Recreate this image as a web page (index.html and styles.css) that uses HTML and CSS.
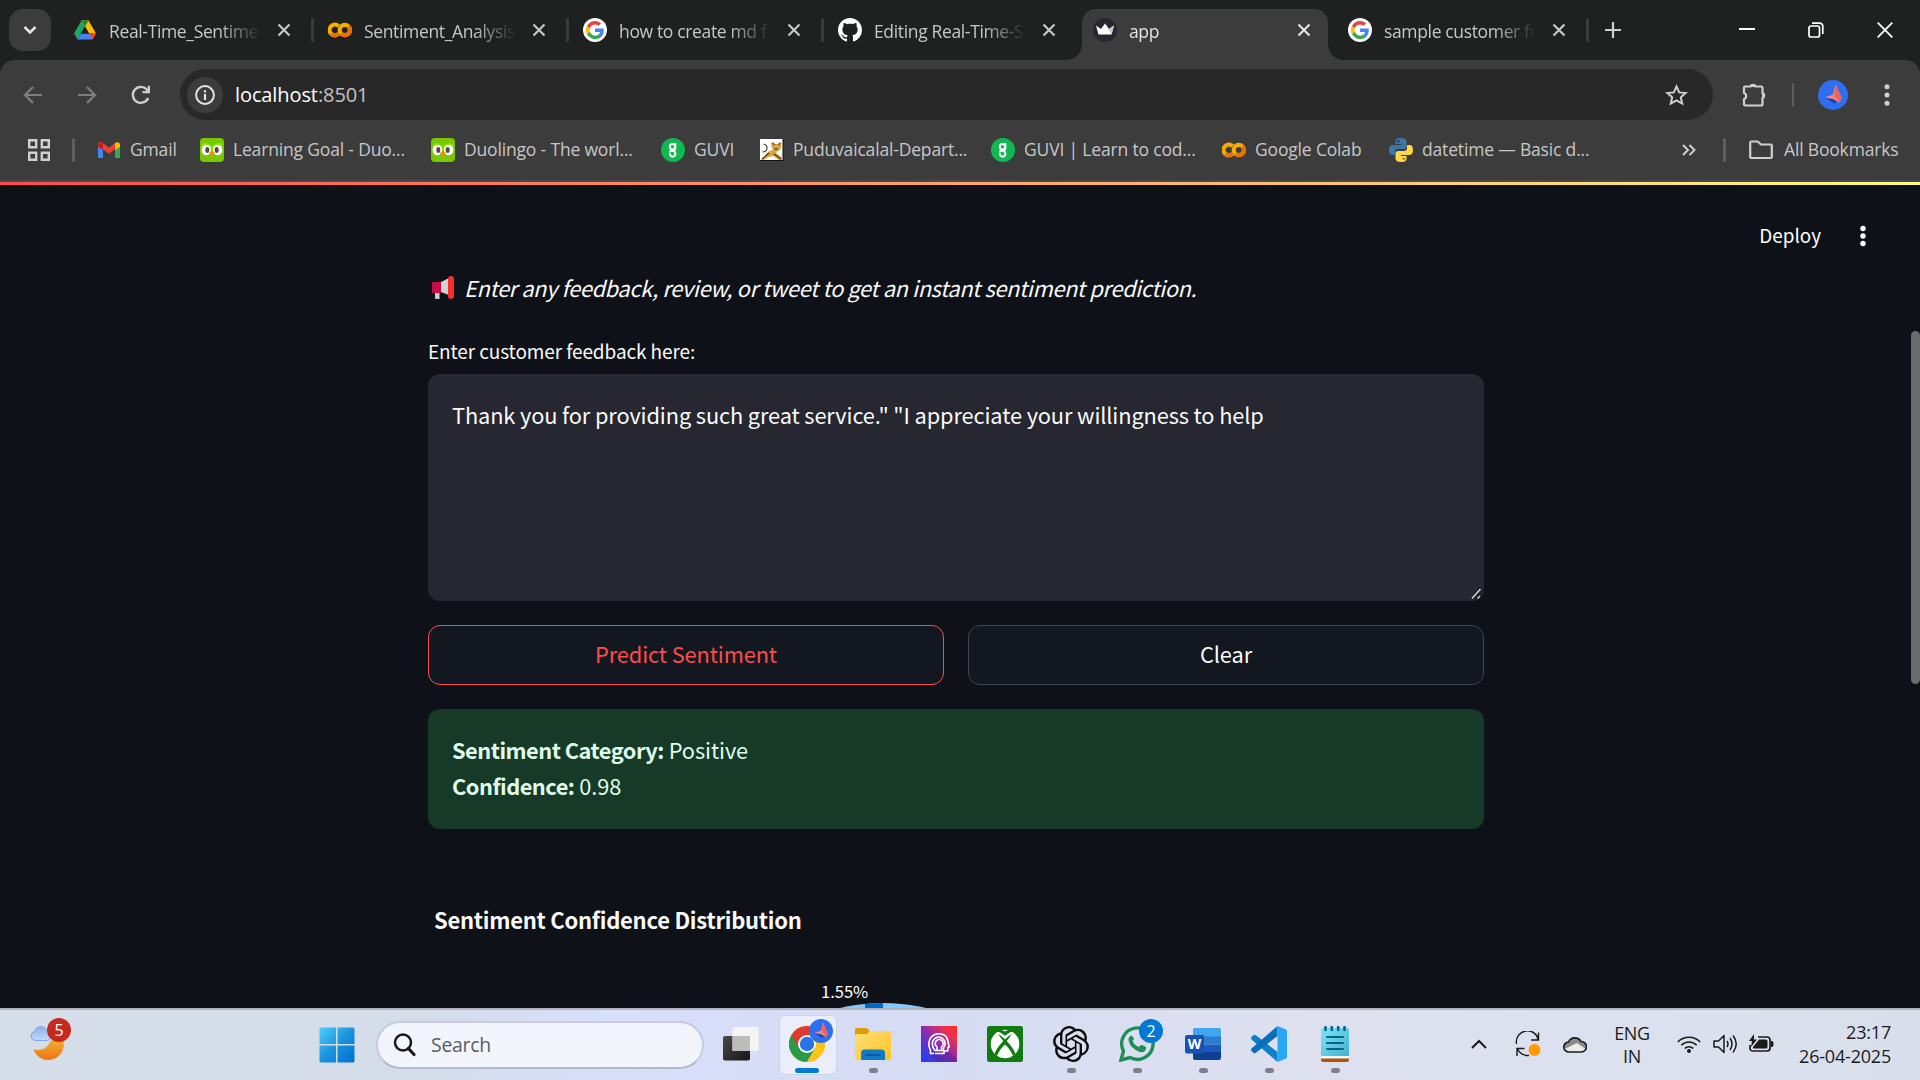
FILE: index.html
```html
<!DOCTYPE html>
<html lang="en">
<head>
<meta charset="utf-8">
<title>app</title>
<link rel="stylesheet" href="styles.css">
</head>
<body>
<svg class="defs" width="0" height="0" aria-hidden="true">
  <defs>
    <linearGradient id="g-start" x1="0" y1="0" x2="1" y2="1"><stop offset="0" stop-color="#4fd0fb"/><stop offset=".5" stop-color="#1a93dd"/><stop offset="1" stop-color="#0070d0"/></linearGradient>
    <linearGradient id="g-moon" x1="0" y1="0" x2="0" y2="1"><stop offset="0" stop-color="#f2b233"/><stop offset="1" stop-color="#ee7416"/></linearGradient>
    <linearGradient id="g-cloud" x1="0" y1="0" x2="0" y2="1"><stop offset="0" stop-color="#8fb0ea"/><stop offset="1" stop-color="#c3d9f8"/></linearGradient>
    <linearGradient id="g-folder" x1="0" y1="0" x2="1" y2="1"><stop offset="0" stop-color="#ffdf75"/><stop offset="1" stop-color="#fdc323"/></linearGradient>
    <linearGradient id="g-head" x1="0" y1="1" x2="1" y2="0"><stop offset="0" stop-color="#1540ff"/><stop offset=".5" stop-color="#8a2db0"/><stop offset=".8" stop-color="#f0304a"/><stop offset="1" stop-color="#ff2a2a"/></linearGradient>
    <linearGradient id="g-note" x1="0" y1="0" x2="1" y2="1"><stop offset="0" stop-color="#7fe4f5"/><stop offset="1" stop-color="#3fb2cf"/></linearGradient>
    <linearGradient id="g-dark" x1="0" y1="0" x2="1" y2="1"><stop offset="0" stop-color="#4a4a4a"/><stop offset="1" stop-color="#161616"/></linearGradient>
  </defs>
  <symbol id="close" viewBox="0 0 14 14"><path d="M1.500 1.500l11 11M12.500 1.500l-11 11" fill="none" stroke="currentColor" stroke-width="2.200"/></symbol>
  <symbol id="google" viewBox="0 0 24 24"><circle cx="12" cy="12" r="12" fill="#fff"/><g transform="translate(2.900 2.900) scale(.76)"><path d="M23.500 12.300c0-.9-.1-1.500-.2-2.200H12v4.500h6.500c-.1 1.100-.8 2.800-2.400 3.900l3.700 2.900c2.300-2.100 3.700-5.200 3.700-9.100z" fill="#4285f4"/><path d="M12 24c3.200 0 6-1.100 7.900-2.900l-3.800-2.900c-1 .7-2.400 1.200-4.100 1.200-3.200 0-5.800-2.100-6.800-5l-3.900 3C3.300 21.300 7.300 24 12 24z" fill="#34a853"/><path d="M5.200 14.400c-.2-.8-.4-1.500-.4-2.400s.1-1.600.4-2.400l-3.900-3C.5 8.200 0 10 0 12s.5 3.800 1.300 5.400z" fill="#fbbc05"/><path d="M12 4.700c2.300 0 3.800 1 4.700 1.800L20.100 3.200C18 1.200 15.200 0 12 0 7.300 0 3.300 2.700 1.300 6.600l3.900 3C6.200 6.700 8.800 4.700 12 4.700z" fill="#ea4335"/></g></symbol>
  <symbol id="colab" viewBox="0 0 24 16"><g fill="none" stroke-width="4.200"><circle cx="16.800" cy="8" r="5.100" stroke="#f9ab00"/><path d="M10.600 4.200A5.300 5.300 0 1 0 10.600 11.800" stroke="#f9ab00"/><path d="M3.400 11.800A5.300 5.300 0 0 0 10.600 11.800M20.500 4.300a5.200 5.200 0 0 1-7.400 7.400" stroke="#e8710a"/></g></symbol>
  <symbol id="duo" viewBox="0 0 24 24"><rect width="24" height="24" rx="4" fill="#78c800"/><path d="M2 6q4-3 10 2 6-5 10-2v7H2z" fill="#8ee000"/><ellipse cx="6.300" cy="12" rx="4.700" ry="5.300" fill="#fff"/><ellipse cx="17.700" cy="12" rx="4.700" ry="5.300" fill="#fff"/><ellipse cx="7.300" cy="12" rx="2" ry="2.900" fill="#4b4b4b"/><ellipse cx="16.700" cy="12" rx="2" ry="2.900" fill="#4b4b4b"/><path d="M9 14.800q3-2 6 0L12 19z" fill="#f49000"/></symbol>
  <symbol id="guvi" viewBox="0 0 24 24"><circle cx="12" cy="12" r="12" fill="#0fb950"/><g fill="none" stroke="#fff" stroke-width="2"><circle cx="11.500" cy="8.700" r="2.700"/><path d="M14.300 5v5.500q0 2-3 2.200-2.500.3-2.500 1.700"/><path d="M9 15.500a2.700 2.700 0 1 0 5.300 0q0-2-2.500-2.600"/></g></symbol>
  <symbol id="avatar" viewBox="0 0 30 30"><circle cx="15" cy="15" r="15" fill="#2d6ff0"/><path d="M6 17l11 7 2-6z" fill="#1647a8"/><path d="M17.500 4L15 14.500 6.500 17.500l8.500 1.500 6.500 3.500 2-4.500z" fill="#f88478"/><path d="M17.500 4l-1 11.500 5 7 2-4.500z" fill="#ef6259"/></symbol>
</svg>

<header class="browser">
  <div class="tabstrip">
    <div class="tab-search"><svg width="14" height="10" viewBox="0 0 14 10"><path d="M1.500 2L7 7.500 12.500 2" fill="none" stroke="#e3e3e3" stroke-width="2.600"/></svg></div>
    <div class="tabs">
      <div class="tab"><svg class="fav" viewBox="0 0 24 24"><path d="M8.500 2.500h7L8 15.500 4.500 21.500 1 15.500z" fill="#1fa463"/><path d="M15.500 2.500L23 15.500h-7L8.500 2.500z" fill="#fbbc04"/><path d="M8.500 2.500h7L12 8.500z" fill="#188038"/><path d="M8 15.500h15l-3.500 6h-15z" fill="#4285f4"/><path d="M16 15.500h7l-3.500 6z" fill="#ea4335"/><path d="M12 8.500l4 7H8z" fill="#1f2020"/></svg><span class="tab-title">Real-Time_Sentime</span><svg class="x"><use href="#close"/></svg></div>
      <div class="tab"><svg class="fav" viewBox="0 -4 24 24"><use href="#colab" width="24" height="16"/></svg><span class="tab-title">Sentiment_Analysis</span><svg class="x"><use href="#close"/></svg></div>
      <div class="tab"><svg class="fav"><use href="#google"/></svg><span class="tab-title">how to create md f</span><svg class="x"><use href="#close"/></svg></div>
      <div class="tab before-active"><svg class="fav" viewBox="0 0 16 16"><path fill="#fff" d="M8 0C3.580 0 0 3.580 0 8c0 3.540 2.290 6.530 5.470 7.590.4.070.55-.17.55-.38 0-.19-.01-.82-.01-1.490-2.010.37-2.530-.49-2.690-.94-.09-.23-.48-.94-.82-1.130-.28-.15-.68-.52-.01-.53.63-.01 1.080.58 1.230.82.72 1.210 1.870.87 2.330.66.070-.52.280-.87.510-1.070-1.780-.2-3.640-.89-3.640-3.950 0-.87.310-1.590.82-2.150-.08-.2-.36-1.020.08-2.120 0 0 .67-.21 2.200.82.64-.18 1.320-.27 2-.27s1.360.09 2 .27c1.530-1.040 2.200-.82 2.200-.82.44 1.100.16 1.920.08 2.120.51.56.82 1.270.82 2.150 0 3.070-1.870 3.750-3.650 3.950.29.25.54.73.54 1.480 0 1.070-.01 1.930-.01 2.200 0 .21.15.46.55.38A8.010 8.010 0 0 0 16 8c0-4.420-3.580-8-8-8z"/></svg><span class="tab-title">Editing Real-Time-S</span><svg class="x"><use href="#close"/></svg></div>
      <div class="tab active"><svg class="fav" viewBox="0 0 24 24"><circle cx="12" cy="12" r="12" fill="#262730"/><path d="M3 7.500l5 3.500L12 5.500l4 5.500 5-3.500-2.500 9h-13z" fill="#fff"/><path d="M12 5.500l4 5.500 5-3.500-2.500 9z" fill="#c9c9cd"/></svg><span class="tab-title">app</span><svg class="x"><use href="#close"/></svg></div>
      <div class="tab"><svg class="fav"><use href="#google"/></svg><span class="tab-title">sample customer fe</span><svg class="x"><use href="#close"/></svg></div>
    </div>
    <svg class="new-tab" width="18" height="18" viewBox="0 0 18 18"><path d="M9 1v16M1 9h16" stroke="#d0d0d0" stroke-width="2.200"/></svg>
    <div class="window-buttons">
      <svg width="16" height="16" viewBox="0 0 16 16"><path d="M0 7h16" stroke="#fff" stroke-width="2"/></svg>
      <svg width="16" height="16" viewBox="0 0 16 16"><rect x="1" y="4" width="10.500" height="11" rx="2" fill="none" stroke="#fff" stroke-width="1.700"/><path d="M4 1.200h7.500q3.300 0 3.300 3.300V12" fill="none" stroke="#fff" stroke-width="1.700"/></svg>
      <svg width="16" height="16" viewBox="0 0 16 16"><path d="M.7.7l14.600 14.600M15.300.7L.7 15.300" stroke="#fff" stroke-width="1.800"/></svg>
    </div>
  </div>

  <div class="toolbar">
    <div class="nav">
      <svg width="20" height="20" viewBox="0 0 20 20"><path d="M19 10H3M10 2l-8 8 8 8" fill="none" stroke="#7f7f7f" stroke-width="2.200"/></svg>
      <svg width="20" height="20" viewBox="0 0 20 20"><path d="M1 10h16M10 2l8 8-8 8" fill="none" stroke="#7f7f7f" stroke-width="2.200"/></svg>
      <svg width="20" height="20" viewBox="0 0 20 20"><path d="M17.200 13A8 8 0 1 1 15.800 4.500L18 7" fill="none" stroke="#cfcfcf" stroke-width="2.400"/><path d="M19 .8v7.500h-7.500V6h5.200V.8z" fill="#cfcfcf"/></svg>
    </div>
    <div class="omnibox">
      <div class="site-info"><svg width="20" height="20" viewBox="0 0 20 20"><circle cx="10" cy="10" r="8.900" fill="none" stroke="#e3e3e3" stroke-width="2"/><path d="M10 9v6M10 5.200v2.300" stroke="#e3e3e3" stroke-width="2.200"/></svg></div>
      <span class="url">localhost<span class="port">:8501</span></span>
      <svg class="star" width="23" height="22" viewBox="0 0 23 22"><path d="M11.500 2.500l2.700 5.900 6.400.6-4.800 4.300 1.400 6.300-5.700-3.300-5.700 3.300 1.400-6.300L2.400 9l6.400-.6z" fill="none" stroke="#cfcfcf" stroke-width="2"/></svg>
    </div>
    <svg class="ext" width="26" height="26" viewBox="0 0 26 26"><path d="M3 5.500q0-1 1-1h5.500a2.700 2.700 0 0 1 5 0H20q1.500 0 1.500 1.500v5a2.700 2.700 0 0 1 0 5v6q0 1.500-1.500 1.500H4q-1 0-1-1v-5.300a3.300 3.300 0 0 0 0-6.200z" fill="none" stroke="#cfcfcf" stroke-width="2.200"/><path d="M9 5a3 3 0 0 1 6 0zM21 10.500a3 3 0 0 1 0 6z" fill="#cfcfcf"/></svg>
    <i class="divider"></i>
    <svg class="profile" width="30" height="30"><use href="#avatar"/></svg>
    <svg class="menu" width="6" height="26" viewBox="0 0 6 26"><g fill="#cfcfcf"><circle cx="3" cy="4.800" r="2.500"/><circle cx="3" cy="13" r="2.500"/><circle cx="3" cy="21.200" r="2.500"/></g></svg>
  </div>

  <nav class="bookmarks">
    <svg class="apps" width="22" height="22" viewBox="0 0 22 22"><path d="M1.200 1.200h7v7h-7zM13.800 1.200h7v7h-7zM1.200 13.800h7v7h-7zM13.800 13.800h7v7h-7z" fill="none" stroke="#cfcfcf" stroke-width="2.400"/></svg>
    <i class="divider"></i>
    <a class="bm"><svg viewBox="0 0 24 24"><path d="M1 6v14h5V10z" fill="#4285f4"/><path d="M23 6v14h-5V10z" fill="#34a853"/><path d="M1 5.500Q2 3 5 4.300l7 5.500 7-5.500v6L12 15.800 1 8z" fill="#ea4335"/><path d="M1 9V6.500Q2 3 6 5v7z" fill="#c5221f"/><path d="M23 9V6.500Q22 3 18 5.200V12z" fill="#fbbc04"/></svg><span>Gmail</span></a>
    <a class="bm"><svg><use href="#duo"/></svg><span>Learning Goal - Duo...</span></a>
    <a class="bm"><svg><use href="#duo"/></svg><span>Duolingo - The worl...</span></a>
    <a class="bm"><svg><use href="#guvi"/></svg><span>GUVI</span></a>
    <a class="bm"><svg viewBox="0 0 24 24"><path d="M0 1h23.500v22H0z" fill="#111"/><path d="M0 1h22.500v21H0z" fill="#fff"/><path d="M11 5l2-1 2 2h3l2-2 1.500 1-.5 5q-1 3-4 3.500l-1 1.500 6.500 5v2h-4l-5-4-5 1-5 3H1l4-4q2-5 8-6-2-3-2-7z" fill="#d9a441"/><path d="M3.500 6q4 1 3.500 4.500T2.500 14M9 15l-7 6M13 5l1.500 2M20 5l-1.500 2M14 11h4M14 16l7 5" fill="none" stroke="#4a3515" stroke-width="1.100"/></svg><span>Puduvaicalal-Depart...</span></a>
    <a class="bm"><svg><use href="#guvi"/></svg><span>GUVI | Learn to cod...</span></a>
    <a class="bm"><svg viewBox="0 -4 24 24"><use href="#colab" width="24" height="16"/></svg><span>Google Colab</span></a>
    <a class="bm"><svg viewBox="0 0 24 24"><path d="M11.800 0C7.500 0 6.500 1.500 6.500 3.500V6H12v1H4Q0 7 0 12t3.500 5H6v-3q0-3 3-3h6q2.500 0 2.500-2.500v-5Q17.500 0 11.800 0z" fill="#3b78aa"/><path d="M12.200 24c4.300 0 5.300-1.500 5.300-3.500V18H12v-1h8q4 0 4-5t-3.500-5H18v3q0 3-3 3H9q-2.500 0-2.500 2.500v5Q6.500 24 12.200 24z" fill="#ffd845"/><circle cx="9.300" cy="3.200" r="1.200" fill="#243b50"/><circle cx="14.700" cy="20.800" r="1.200" fill="#a08020"/></svg><span>datetime — Basic d...</span></a>
    <svg class="more" width="14" height="12" viewBox="0 0 14 12"><path d="M1 1l5 5-5 5M7.500 1l5 5-5 5" fill="none" stroke="#cfcfcf" stroke-width="2"/></svg>
    <i class="divider"></i>
    <a class="bm all"><svg viewBox="0 0 24 24"><path d="M1.200 19V4.500q0-1 1-1h6.500L12 6.500h9.800q1 0 1 1V19q0 1-1 1H2.200q-1 0-1-1z" fill="none" stroke="#cfcfcf" stroke-width="2.200"/></svg><span>All Bookmarks</span></a>
  </nav>
</header>

<main class="page">
  <div class="rainbow"></div>
  <div class="app-header">
    <span class="deploy">Deploy</span>
    <svg width="6" height="22" viewBox="0 0 6 22"><g fill="#fff"><circle cx="3" cy="3.500" r="2.700"/><circle cx="3" cy="11" r="2.700"/><circle cx="3" cy="18.500" r="2.700"/></g></svg>
  </div>
  <section class="content">
    <p class="intro"><svg width="23" height="23" viewBox="0 0 23 23"><path d="M3 16h4.500v7H4q-1 0-1-1z" fill="#cfcfcf"/><path d="M9 6l9-4.500v18L9 16z" fill="#d3d3d3"/><path d="M1.500 6H9v11H1.500Q0 17 0 15.500v-8Q0 6 1.500 6z" fill="#ca0b4a"/><rect x="16" y="0" width="6" height="23" rx="3" fill="#f92f2f"/></svg><em>Enter any feedback, review, or tweet to get an instant sentiment prediction.</em></p>
    <label class="label">Enter customer feedback here:</label>
    <div class="textarea"><span>Thank you for providing such great service." "I appreciate your willingness to help</span>
      <svg class="grip" width="12" height="12" viewBox="0 0 12 12"><path d="M1 11.500L10.500 1M6 11.500L11 6.500" stroke="#111" stroke-width="1.500"/><path d="M1.800 11.500L10.500 2M7.500 11.500l2.500-2.500" stroke="#d8d8d8" stroke-width="1.500"/></svg></div>
    <div class="buttons">
      <button class="btn primary"><span>Predict Sentiment</span></button>
      <button class="btn"><span>Clear</span></button>
    </div>
    <div class="result">
      <div><b>Sentiment Category:</b> Positive</div>
      <div><b>Confidence:</b> 0.98</div>
    </div>
    <div class="chart">
      <h2>Sentiment Confidence Distribution</h2>
      <div class="slice-label">1.55%</div>
      <svg class="pie" width="374" height="374" viewBox="-187 -187 374 374"><circle r="187" fill="#83c9ff"/><path d="M0 0V-187A187 187 0 0 0 -18.200 -186.100z" fill="#0068c9"/></svg>
    </div>
  </section>
  <div class="scroll-thumb"></div>
</main>

<footer class="taskbar">
  <div class="weather"><svg width="40" height="40" viewBox="0 0 40 40"><path d="M5 15.500a4.600 4.600 0 0 1-.5-9A6.500 6.500 0 0 1 16.500 5q4 1 4 5.500t-3 5z" fill="url(#g-cloud)" stroke="#86a6e8"/><path d="M33 14a15.300 15.300 0 0 1-29.500 10.500Q16 27 21 15.500z" fill="url(#g-moon)"/></svg><span class="badge red">5</span></div>
  <div class="start"><svg width="36" height="36" viewBox="0 0 36 36"><path d="M2 .5h15v16.600H.5V2Q.5.500 2 .5zM18.500.5H34Q35.500.500 35.500 2v15.100h-17zM.5 18.500H17v17H2Q.500 35.500.500 34zM18.500 18.500h17V34q0 1.500-1.500 1.500H18.500z" fill="url(#g-start)"/></svg></div>
  <div class="search"><svg width="23" height="24" viewBox="0 0 23 24"><circle cx="10" cy="9.500" r="8" fill="none" stroke="#1b1b1b" stroke-width="2.500"/><path d="M15.500 15.500l5.500 6" stroke="#1b1b1b" stroke-width="3.200" stroke-linecap="round"/></svg><span>Search</span></div>
  <div class="pinned">
    <div class="slot"><svg viewBox="0 0 36 36"><rect x="0" y="10" width="27" height="24.500" rx="2" fill="url(#g-dark)"/><rect x="9.500" y="1" width="26" height="24" rx="1.500" fill="#f4f4f4"/><rect x="9.500" y="10" width="17.500" height="15" fill="#bcbcbc"/></svg></div>
    <div class="slot current"><svg viewBox="0 0 36 36"><circle cx="18" cy="18" r="18" fill="#fbc116"/><path d="M18 18L2.400 9A18 18 0 0 0 18 36l8-13z" fill="#2a9a48"/><path d="M18 18L10.200 22.500 2.400 9A18 18 0 0 1 33.600 9H18z" fill="#df3a2f"/><path d="M25.800 22.500L18 36A18 18 0 0 0 33.600 9H18z" fill="#fcc31b"/><circle cx="18" cy="18" r="9" fill="#fff"/><circle cx="18" cy="18" r="7.200" fill="#2a72e8"/></svg><svg class="mini"><use href="#avatar"/></svg></div>
    <div class="slot open"><svg viewBox="0 0 36 36"><path d="M0 4q0-2 2-2h9q1.500 0 2.500 1.500L15 6v5H0z" fill="#dd9d08"/><path d="M0 10q0-2 2-2h10l3-3h19q2 0 2 2v25q0 2-2 2H2q-2 0-2-2z" fill="url(#g-folder)"/><path d="M6 34v-7q0-3.500 3.500-3.500h17q3.500 0 3.500 3.500v7z" fill="#1279c8"/><path d="M11.500 29h13" stroke="#0b5a9c" stroke-width="2" stroke-linecap="round"/></svg></div>
    <div class="slot"><svg viewBox="0 0 36 36"><path d="M0 0h36v36H0z" fill="url(#g-head)"/><path d="M9 28h11l8-3 8 8v3H16z" fill="#1b0a60" opacity=".18"/><g fill="none" stroke="#fff" stroke-width="1.600" stroke-linejoin="round"><path d="M13 27.500H9.500V24.500Q7.800 21 7.800 17.500A9.800 9.800 0 0 1 17.500 7.700Q26 7.700 27 15.500l1.200 5.500-1.400.6V25H23v2.500h-9"/><path d="M14 24.500q-2.700-3-2.700-7a6.400 6.400 0 0 1 12.800 0q0 2.500-1.600 4.200v2.800h-8.500z"/><path d="M16 24v-3.200a4 4 0 1 1 4.500 0V24"/></g></svg></div>
    <div class="slot"><svg viewBox="0 0 36 36"><rect width="36" height="36" rx="2.500" fill="#107c10"/><circle cx="18" cy="18" r="14.300" fill="#fff"/><path d="M18 9.800C14 6.500 10.500 5 8.300 5.600 11 3 14.500 3.500 18 5.500c3.500-2 7-2.500 9.700.1C25.500 5 22 6.500 18 9.800zM11 8Q15 10 18 13.300 21 10 25 8q-2.500 3.500-5.300 7Q26 21.500 28.500 27.500L26 30Q23.500 23.500 18 18.500 12.500 23.500 10 30L7.500 27.500Q10 21.500 16.300 15 13.500 11.500 11 8z" fill="#107c10"/></svg></div>
    <div class="slot open"><svg viewBox="0 0 24 24"><path fill="#0b0b0b" d="M22.282 9.821a5.985 5.985 0 0 0-.516-4.910 6.046 6.046 0 0 0-6.510-2.900A6.065 6.065 0 0 0 4.981 4.182a5.985 5.985 0 0 0-3.998 2.900 6.046 6.046 0 0 0 .743 7.097 5.980 5.980 0 0 0 .510 4.911 6.051 6.051 0 0 0 6.515 2.900A5.985 5.985 0 0 0 13.260 24a6.056 6.056 0 0 0 5.772-4.206 5.990 5.990 0 0 0 3.998-2.900 6.056 6.056 0 0 0-.748-7.073zM13.260 22.430a4.476 4.476 0 0 1-2.876-1.040l.141-.081 4.779-2.758a.795.795 0 0 0 .392-.681v-6.737l2.020 1.168a.071.071 0 0 1 .038.052v5.583a4.504 4.504 0 0 1-4.494 4.494zM3.600 18.304a4.470 4.470 0 0 1-.535-3.014l.142.085 4.783 2.759a.771.771 0 0 0 .780 0l5.843-3.369v2.332a.080.080 0 0 1-.033.062L9.740 19.950a4.500 4.500 0 0 1-6.140-1.646zM2.340 7.896a4.485 4.485 0 0 1 2.366-1.973V11.600a.766.766 0 0 0 .388.676l5.815 3.355-2.020 1.168a.076.076 0 0 1-.071 0l-4.830-2.786A4.504 4.504 0 0 1 2.340 7.872zm16.597 3.855l-5.833-3.387L15.119 7.200a.076.076 0 0 1 .071 0l4.830 2.791a4.494 4.494 0 0 1-.676 8.105v-5.678a.790.790 0 0 0-.407-.667zm2.010-3.023l-.141-.085-4.774-2.782a.776.776 0 0 0-.785 0L9.409 9.230V6.897a.066.066 0 0 1 .028-.061l4.830-2.787a4.500 4.500 0 0 1 6.680 4.660zm-12.640 4.135l-2.020-1.164a.080.080 0 0 1-.038-.057V6.075a4.500 4.500 0 0 1 7.375-3.453l-.142.080L8.704 5.460a.795.795 0 0 0-.393.681zm1.097-2.365l2.602-1.500 2.607 1.500v2.999l-2.597 1.500-2.607-1.500z"/></svg></div>
    <div class="slot open"><svg viewBox="0 0 36 36"><path d="M2 34l2.500-9A15.700 15.700 0 1 1 11 31.500z" fill="none" stroke="#1d8f55" stroke-width="3.400"/><path d="M12.500 9.500q-3 1-3 4.500 1 8 11.500 12 4.500 1 6-3v-2l-4.500-2.300q-1 .2-2.500 2.300-4.500-1.500-6.500-6 1.700-1.500 1.500-2.500z" fill="#1d8f55"/></svg><span class="badge blue">2</span></div>
    <div class="slot open"><svg viewBox="0 0 36 36"><path d="M10 2h24q2 0 2 2v7H8V4q0-2 2-2z" fill="#41a5ee"/><path d="M8 10.500h28v8H8z" fill="#2b7cd3"/><path d="M8 18.500h28v8H8z" fill="#185abd"/><path d="M8 26h28v6q0 2-2 2H10q-2 0-2-2z" fill="#103f91"/><rect x="0" y="9" width="19" height="18.500" rx="2" fill="#1652b0"/><text x="9.500" y="23" class="word-w">W</text></svg></div>
    <div class="slot open"><svg viewBox="0 0 36 36"><path d="M0 11.500l2.500-2.500q1-.5 2 0L26.500 26v10L.5 13.500z" fill="#0d80cc"/><path d="M0 24.500l2.500 2.500q1 .5 2 0L26.500 10V0L.5 22.500z" fill="#0a6fb8"/><path d="M26.500 0L35 3.500q1 .5 1 1.500v26q0 1-1 1.500L26.500 36z" fill="#2aa7f2"/></svg></div>
    <div class="slot open"><svg viewBox="0 0 36 36"><path d="M4 32h28v2q0 2-2 2H6q-2 0-2-2z" fill="#b4530c"/><rect x="4" y="2" width="28" height="29.500" rx="2" fill="url(#g-note)"/><path d="M4 30h28v2.500H4z" fill="#f2f7fa"/><g stroke="#0a6384" stroke-linecap="round"><path d="M8.500 1v3M14.800 1v3M21.200 1v3M27.500 1v3" stroke-width="2.600"/><path d="M10 11h16M10 17h16M10 23h16" stroke-width="2"/></g></svg></div>
  </div>
  <div class="tray">
    <svg class="chev" width="16" height="10" viewBox="0 0 16 10"><path d="M1 9l7-7 7 7" fill="none" stroke="#1b1b1b" stroke-width="2"/></svg>
    <svg class="sync" width="26" height="26" viewBox="0 0 26 26"><path d="M1.500 13A11 11 0 0 1 23.500 9M23.500 1.500V9H16M14 24.500Q6 25 2.500 18M2 25v-7.500h7.500" fill="none" stroke="#1b1b1b" stroke-width="1.400"/><circle cx="19.500" cy="19" r="6" fill="#ff9a00"/></svg>
    <svg class="cloud" width="24" height="18" viewBox="0 0 24 18"><path d="M6 17a5 5 0 0 1-.5-10A7 7 0 0 1 18 6.500 5.200 5.200 0 0 1 18.500 17z" fill="#8b8b8b"/><path d="M1.500 14L14 8l8.500 6-2.500 3H5z" fill="#ececec"/><path d="M6 17a5 5 0 0 1-.5-10A7 7 0 0 1 18 6.500 5.200 5.200 0 0 1 18.500 17z" fill="none" stroke="#1b1b1b" stroke-width="1.600"/></svg>
    <div class="lang">ENG<br>IN</div>
    <svg class="wifi" width="24" height="18" viewBox="0 0 24 18"><path d="M.8 7a15.500 15.500 0 0 1 22.400 0M4.300 10.300a10.700 10.700 0 0 1 15.400 0M7.700 13.500a6 6 0 0 1 8.600 0" fill="none" stroke="#1b1b1b" stroke-width="1.600"/><circle cx="12" cy="16" r="2" fill="#1b1b1b"/></svg>
    <svg class="vol" width="26" height="20" viewBox="0 0 26 20"><path d="M1 7h4.500L11 1.500v17L5.500 13H1z" fill="none" stroke="#1b1b1b" stroke-width="1.500" stroke-linejoin="round"/><path d="M14 7q2 3 0 6M17 4q4 6 0 12M20 1.500q6.500 8.500 0 17" fill="none" stroke="#1b1b1b" stroke-width="1.500"/></svg>
    <svg class="batt" width="25" height="20" viewBox="0 0 25 20"><path d="M9 3h9q3 0 3 3v8q0 3-3 3H4q-3 0-3-3v-3" fill="none" stroke="#1b1b1b" stroke-width="1.700"/><path d="M10 5.500h7q1.500 0 1.500 1.500v6q0 1.500-1.500 1.500H5Q3.500 14.500 4 13zM22 7h1q1.500 0 1.500 3T23 13h-1zM5 0L0 7h3l-1 6 6-7.500H5z" fill="#1b1b1b"/></svg>
    <div class="clock">23:17<br>26-04-2025</div>
  </div>
</footer>
</body>
</html>
```
FILE: styles.css
```css
* { box-sizing: border-box; }
body {
  margin: 0;
  width: 1920px;
  height: 1080px;
  overflow: hidden;
  display: flex;
  flex-direction: column;
  background: #0e1117;
  font-family: "Open Sans", "Noto Sans", sans-serif;
  font-size: 17.500px;
  white-space: nowrap;
}
svg { display: block; flex: none; }
.defs { position: absolute; }

/* Browser window */
.browser { flex: none; height: 182px; background: #1f2020; }
.tabstrip { height: 60px; display: flex; align-items: center; }
.tab-search {
  width: 42px; height: 42px; margin: 0 6px 0 9px;
  border-radius: 14px; background: #3c3c3c;
  display: flex; align-items: center; justify-content: center;
}
.tabs { display: flex; height: 60px; flex: none; }
.tab {
  position: relative;
  width: 255px; height: 60px; padding-left: 16px;
  display: flex; align-items: center;
  color: #c7c7c7;
}
.tab::after {
  content: ""; position: absolute; right: -2px; top: 18px;
  width: 3px; height: 24px; border-radius: 2px; background: #3c3c3c;
}
.tab .fav { width: 24px; height: 24px; z-index: 1; }
.tab-title {
  z-index: 1;
  width: 156px; height: 26px; margin: 2px 12px 0 12px;
  line-height: 26px; overflow: hidden; letter-spacing: -.35px;
  -webkit-mask-image: linear-gradient(90deg, #000 110px, transparent 152px);
  mask-image: linear-gradient(90deg, #000 110px, transparent 152px);
}
.tab .x { width: 14px; height: 14px; z-index: 1; }
.tab.before-active::after { display: none; }
.tab.active { color: #e3e3e3; }
.tab.active::before {
  content: ""; position: absolute; left: 5px; right: 4px; top: 9px; bottom: 0;
  background: #3c3c3c; border-radius: 14px 14px 0 0;
}
.tab.active::after {
  left: -10px; right: -11px; top: auto; bottom: 0; width: auto; height: 15px; border-radius: 0;
  background:
    radial-gradient(circle at 0 0, transparent 14.500px, #3c3c3c 15px) left / 15px 15px no-repeat,
    radial-gradient(circle at 100% 0, transparent 14.500px, #3c3c3c 15px) right / 15px 15px no-repeat;
}
.new-tab { margin-left: 17px; }
.window-buttons { margin-left: auto; margin-right: 27px; display: flex; gap: 53px; }

.toolbar {
  height: 69px;
  background: #3c3c3c; border-radius: 15px 15px 0 0;
  display: flex; align-items: center;
}
.nav { width: 180px; padding-left: 23px; display: flex; gap: 34px; }
.omnibox {
  width: 1533px; height: 51px; border-radius: 26px; background: #282828;
  padding: 0 25px 0 7px; display: flex; align-items: center;
}
.site-info {
  width: 36px; height: 36px; border-radius: 50%; background: #3c3c3c; margin-right: 12px;
  display: flex; align-items: center; justify-content: center;
}
.url { flex: 1; font-size: 20px; letter-spacing: -.1px; color: #fff; }
.port { color: #c3c3c3; }
.ext { margin-left: 28px; }
.divider { width: 3px; height: 24px; border-radius: 2px; background: #5e5e5e; flex: none; }
.toolbar .divider { margin-left: 25px; width: 2px; }
.profile { margin-left: 24px; }
.menu { margin-left: 36px; }

.bookmarks {
  height: 53px; padding-bottom: 10px;
  background: #3c3c3c; border-bottom: 2px solid #484848;
  color: #c7c7c7;
  display: grid; align-items: center; justify-content: start;
  grid-template-columns: 44px 25px 103px 231px 230px 99px 231px 231px 167px 293px 41px 26px 170px;
  padding-left: 28px;
}
.bm { display: flex; align-items: center; gap: 9px; letter-spacing: -.17px; }
.bm svg { width: 24px; height: 24px; }
.bm span { margin-top: -1px; }
.bm.all { gap: 11px; }

/* Web page */
.page {
  position: relative; flex: 1; min-height: 0; overflow: hidden;
  font-family: "Noto Sans CJK SC", "Noto Sans CJK JP", sans-serif;
  color: #fafafa;
}
.rainbow { height: 3px; background: linear-gradient(90deg, #ff4b4b, #fffd80); }
.app-header {
  height: 102px; padding-right: 54px;
  display: flex; align-items: center; justify-content: flex-end; gap: 39px;
}
.deploy { font-size: 18.900px; color: #fff; font-weight: 400; padding-bottom: 4px; }
.content { width: 1056px; margin-left: 428px; font-size: 21.800px; }
.intro { height: 36px; margin: -18px 0 0 4px; display: flex; align-items: center; gap: 9px; }
.intro em { letter-spacing: -.37px; }
.label {
  display: block; height: 30px; margin-top: 31px;
  font-size: 19px; line-height: 30px; letter-spacing: -.1px;
}
.textarea {
  position: relative; height: 227px; margin-top: 8px; padding: 23px 24px;
  background: #262730; border-radius: 12px; line-height: 36px; letter-spacing: -.13px;
}
.grip { position: absolute; right: 2px; bottom: 2px; }
.buttons { display: flex; gap: 24px; margin: 24px 0; }
.btn {
  flex: 1; height: 60px; padding: 0 0 4px;
  background: #131720; border: 1px solid #41444c; border-radius: 12px;
  color: #fafafa; font: inherit; letter-spacing: -.12px;
}
.btn.primary { color: #ff4b4b; border-color: #ff4b4b; }
.result {
  height: 120px; padding: 23px 24px; border-radius: 12px;
  background: #173928; color: #dffde9; line-height: 36px; letter-spacing: -.1px;
}
.result b { font-weight: 700; letter-spacing: -.5px; }
.chart { padding: 73px 0 0 6px; }
.chart h2 { margin: 0; font-size: 22px; line-height: 34px; font-weight: 700; letter-spacing: -.26px; }
.slice-label { margin: 42px 0 0 387px; font-size: 16.500px; line-height: 26px; }
.pie { margin: -1px 0 0 262px; }
.scroll-thumb {
  position: absolute; right: 0; top: 149px; width: 9px; height: 353px;
  border-radius: 5px; background: #6b6c70;
}

/* Taskbar */
.taskbar {
  flex: none; height: 72px; border-top: 2px solid #b0b3be;
  background: linear-gradient(90deg, #d5dde8 0, #d4dde9 22%, #d7dffa 32%, #d8dcf6 42%, #d5dcf2 50%, #dcdff0 62%, #dee0ee 72%, #dbe1ee 85%, #d8dfeb 100%);
  color: #1b1b1b;
  display: flex; align-items: center;
}
.weather { position: relative; width: 304px; padding-left: 30px; }
.badge {
  position: absolute; width: 24px; height: 24px; border-radius: 50%;
  color: #fff; font-size: 16px; line-height: 24px; text-align: center;
}
.red { left: 47px; top: -7px; background: #c42b1c; }
.blue { left: 35px; top: 9px; background: #0078d4; }
.start { width: 72px; padding-left: 15px; }
.search {
  width: 328px; height: 48px; margin: -1px 4px 0 0; padding-left: 15px;
  border: 2px solid #c5cbe2; border-bottom-color: #b4bacb; border-radius: 24px; background: #f3f5fc;
  display: flex; align-items: center; gap: 15px;
  font-size: 19.500px; letter-spacing: -.3px; color: #5c5c5f;
}
.pinned { display: flex; }
.slot { position: relative; width: 66px; height: 70px; display: flex; align-items: center; justify-content: center; }
.slot > svg { width: 36px; height: 36px; margin-top: -2px; z-index: 1; }
.slot .badge, .slot .mini { z-index: 2; }
.slot > .mini { position: absolute; left: 35px; top: 9px; width: 24px; height: 24px; margin: 0; }
.current::before {
  content: ""; position: absolute; left: 5px; top: 5px; width: 56px; height: 58px;
  border: 1px solid #ced4e6; border-radius: 6px; background: #eaeefa;
}
.current::after, .open::after {
  content: ""; position: absolute; bottom: 7px; left: 29px; width: 9px; height: 5px;
  border-radius: 3px; background: #7d808b;
}
.current::after { left: 21px; width: 24px; background: #0078d4; }
.word-w { font: 700 14px "Open Sans", sans-serif; fill: #fff; text-anchor: middle; }
.tray { margin-left: auto; margin-right: 29px; display: flex; align-items: center; font-size: 18px; line-height: 24px; }
.tray svg { margin-top: -2px; }
.chev { margin-right: 28px; }
.sync { margin-right: 22px; }
.cloud { margin-right: 25px; }
.lang { width: 40px; margin-right: 25px; text-align: center; letter-spacing: -.3px; line-height: 23px; }
.wifi { margin-right: 12px; }
.vol { margin-right: 10px; }
.batt { width: 25px; }
.clock { width: 117px; padding-bottom: 2px; text-align: right; letter-spacing: -.2px; }
```
